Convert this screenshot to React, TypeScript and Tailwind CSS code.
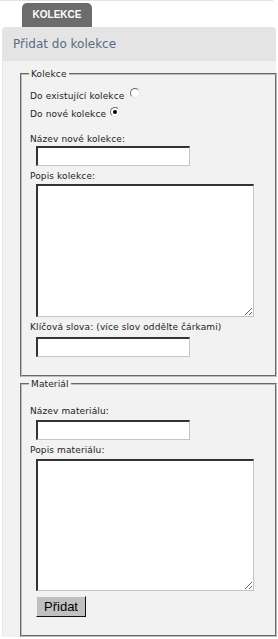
import React from 'react';

const labelFont = { fontFamily: '"DejaVu Sans", Verdana, sans-serif' };

const Radio: React.FC<{ checked?: boolean; className?: string }> = ({ checked, className }) => (
  <span
    className={
      'relative inline-block w-[10px] h-[10px] rounded-full border border-t-[#6b6b6b] border-l-[#6b6b6b] border-r-[#e2e2e2] border-b-[#e2e2e2] bg-white ' +
      (className ?? '')
    }
  >
    {checked && <span className="absolute left-[2px] top-[2px] w-[4px] h-[4px] rounded-full bg-black" />}
  </span>
);

const inputCls =
  'block bg-white border-t-2 border-l-2 border-r border-b border-t-[#333] border-l-[#333] border-r-[#c4c4c4] border-b-[#c4c4c4] outline-none';

export default function App() {
  return (
    <div className="w-[278px] h-[639px] bg-white overflow-hidden" style={labelFont}>
      {/* top edge of previous box */}
      <div className="h-[3px] mr-[5px] border-t border-[#e2e2e2] rounded-br" />

      {/* tab */}
      <div className="ml-[22px] w-[70px] h-[24px] bg-[#6c6c6c] rounded-t-[5px] flex items-center justify-center">
        <span className="text-white font-bold text-[10px] leading-none" style={{ fontFamily: '"Liberation Sans", Arial, sans-serif' }}>
          KOLEKCE
        </span>
      </div>

      {/* panel */}
      <div className="ml-[2px] w-[274px] rounded-t-[4px] bg-[#f2f2f2] border-l border-[#e6e6e6]">
        <div className="h-[34px] bg-[#e4e4e4] rounded-t-[4px] flex items-center pl-[10px]">
          <span className="text-[12px] text-[#5a6a82]">Přidat do kolekce</span>
        </div>

        <div className="pt-[7px] pl-[17px] text-[9px] tracking-[0.12px] text-[#222]">
          {/* Kolekce */}
          <fieldset className="w-[257px] border-2 [border-style:groove] border-[#bdbdbd] pl-[8px] pt-[7px] pb-[18px]">
            <legend className="px-[2px] -ml-[1px] leading-[12px] text-[#222]">Kolekce</legend>
            <div className="h-[18px] leading-[18px] flex items-start">
              <span>Do existující kolekce</span>
              <Radio className="ml-[6px] mt-[1px]" />
            </div>
            <div className="h-[18px] leading-[18px] flex items-start">
              <span>Do nové kolekce</span>
              <Radio checked className="ml-[4px] mt-[2px]" />
            </div>
            <div className="mt-[9px] h-[14px] leading-[14px]">Název nové kolekce:</div>
            <input className={inputCls + ' ml-[6px] w-[154px] h-[20px]'} />
            <div className="mt-[3px] h-[14px] leading-[14px]">Popis kolekce:</div>
            <textarea className={inputCls + ' mt-[1px] ml-[6px] w-[218px] h-[133px] resize'} />
            <div className="mt-[3px] h-[14px] leading-[14px]">Klíčová slova: (více slov oddělte čárkami)</div>
            <input className={inputCls + ' mt-[3px] ml-[6px] w-[154px] h-[20px]'} />
          </fieldset>

          {/* Materiál */}
          <fieldset className="mt-[1px] w-[257px] border-2 [border-style:groove] border-[#bdbdbd] pl-[8px] pt-[14px] pb-[18px]">
            <legend className="px-[2px] -ml-[1px] leading-[12px] text-[#222]">Materiál</legend>
            <div className="h-[14px] leading-[14px]">Název materiálu:</div>
            <input className={inputCls + ' mt-[2px] ml-[6px] w-[154px] h-[20px]'} />
            <div className="mt-[3px] h-[14px] leading-[14px]">Popis materiálu:</div>
            <textarea className={inputCls + ' mt-[2px] ml-[6px] w-[218px] h-[132px] resize'} />
            <button
              className="mt-[5px] ml-[6px] w-[50px] h-[21px] bg-[#c0c0c0] border border-t-[#f0f0f0] border-l-[#f0f0f0] border-r-[#111] border-b-[#111] text-[13px] tracking-normal text-black leading-none"
              style={{ fontFamily: '"Liberation Sans", Arial, sans-serif' }}
            >
              Přidat
            </button>
          </fieldset>
        </div>
      </div>
    </div>
  );
}
